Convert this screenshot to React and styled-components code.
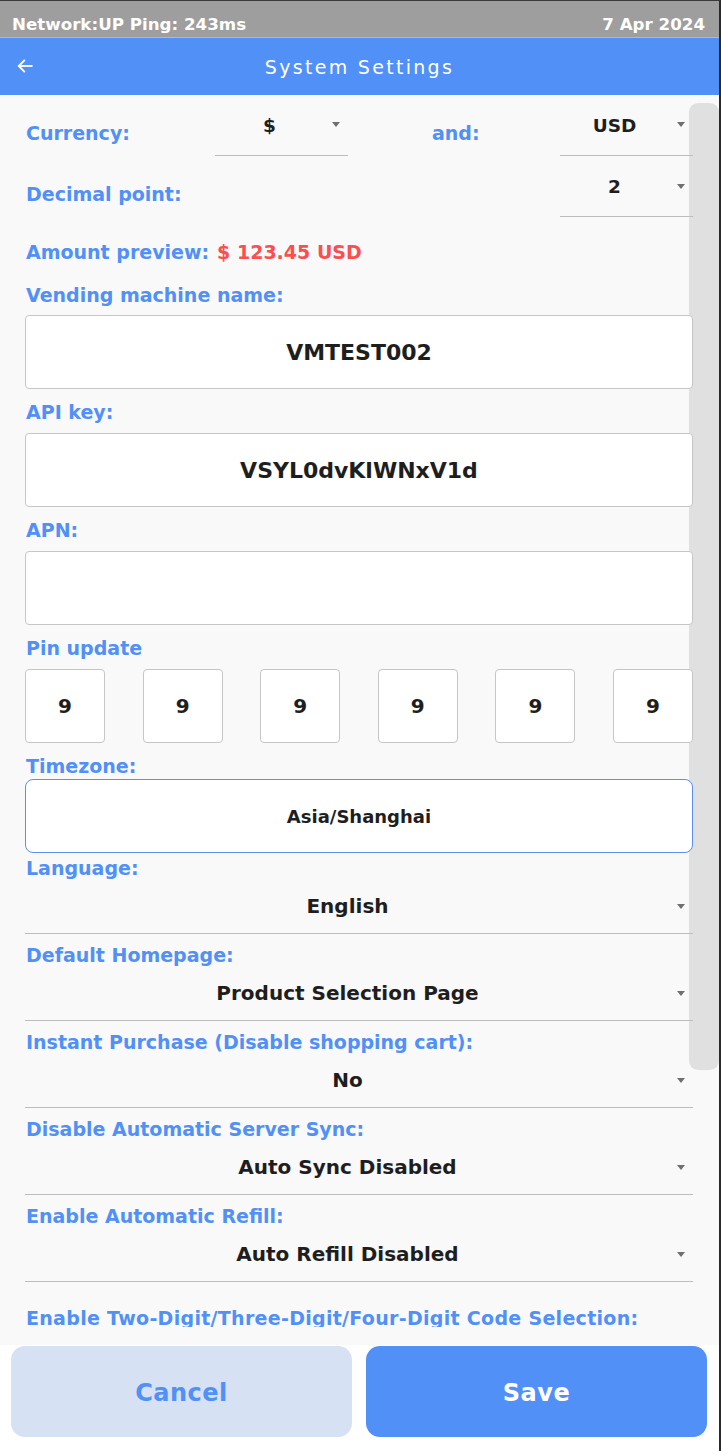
import React from 'react'
import styled, { createGlobalStyle } from 'styled-components'

const BLUE = '#5190f7'
const FONT = `"DejaVu Sans", "Noto Sans", sans-serif`

const GlobalStyle = createGlobalStyle`
  html, body {
    margin: 0;
    padding: 0;
    background: #ffffff;
  }
  * {
    box-sizing: border-box;
  }
`

const Frame = styled.div`
  width: 721px;
  height: 1451px;
  display: flex;
  flex-direction: column;
  border-top: 1px solid #3a3a3a;
  border-right: 2px solid #2a2a2a;
  background: #ffffff;
  overflow: hidden;
  font-family: ${FONT};
`

const StatusBar = styled.div`
  height: 37px;
  flex-shrink: 0;
  background: #9e9e9e;
  display: flex;
  align-items: center;
  justify-content: space-between;
  padding: 9px 14px 0 12px;
  color: #ffffff;
  font-weight: 700;
  font-size: 16.7px;
  border-bottom: 1px solid #b8b8b8;
`

const Header = styled.div`
  height: 57px;
  flex-shrink: 0;
  background: ${BLUE};
  display: flex;
  align-items: center;
  position: relative;
  justify-content: center;
  color: #ffffff;
  font-size: 19px;
  letter-spacing: 2.3px;
`

const BackButton = styled.div`
  position: absolute;
  left: 15px;
  top: 18px;
  width: 20px;
  height: 20px;
  display: flex;
`

const Content = styled.div`
  flex: 1;
  position: relative;
  overflow: hidden;
  background: #f9f9f9;
  padding: 10px 28px 0 25px;
`

const ScrollThumb = styled.div`
  position: absolute;
  right: 0;
  top: 8px;
  width: 30px;
  height: 967px;
  border-radius: 9px;
  background: #e0e0e0;
`

const Inner = styled.div`
  position: relative;
  width: 668px;
`

const TopRow = styled.div`
  display: flex;
  height: 51px;
  margin-top: ${p => p.$mt || 0}px;
`

const InlineLabel = styled.div`
  width: ${p => p.$w}px;
  padding-top: ${p => p.$pt || 18}px;
  padding-left: 1px;
  font-weight: 700;
  font-size: 19px;
  color: ${BLUE};
  margin-left: ${p => p.$ml || 0}px;
`

const SmallSelect = styled.div`
  width: 133px;
  height: 51px;
  position: relative;
  border-bottom: 1px solid #bdbdbd;
  padding: 10px 24px 0 0;
  text-align: center;
  font-weight: 700;
  font-size: 18.5px;
  color: #1e1e1e;
`

const Caret = styled.span`
  position: absolute;
  right: 8px;
  top: ${p => p.$top}px;
  width: 0;
  height: 0;
  border-left: 4px solid transparent;
  border-right: 4px solid transparent;
  border-top: 5px solid #6f6f6f;
`

const Preview = styled.div`
  margin-top: 23px;
  height: 24px;
  padding-left: 1px;
  display: flex;
  align-items: center;
  gap: 8px;
  font-weight: 700;
  font-size: 19px;
  color: ${BLUE};
`

const Amount = styled.span`
  color: #fb4f4f;
`

const FieldLabel = styled.div`
  margin-top: ${p => p.$mt ?? 11}px;
  height: ${p => p.$h || 24}px;
  line-height: 24px;
  padding-left: 1px;
  overflow: hidden;
  font-weight: 700;
  font-size: 19px;
  letter-spacing: ${p => p.$ls || 0}px;
  color: ${BLUE};
  white-space: nowrap;
`

const TextBox = styled.div`
  margin-top: ${p => p.$mt ?? 9}px;
  height: 74px;
  display: flex;
  align-items: center;
  justify-content: center;
  background: #ffffff;
  border: 1px solid ${p => (p.$focus ? '#5b8ff0' : '#c6c6c6')};
  border-radius: ${p => (p.$focus ? 8 : 4)}px;
  font-weight: 700;
  font-size: ${p => p.$size || 22}px;
  color: #1e1e1e;
`

const PinRow = styled.div`
  margin-top: 9px;
  display: flex;
  justify-content: space-between;
`

const PinBox = styled.div`
  width: 80px;
  height: 74px;
  display: flex;
  align-items: center;
  justify-content: center;
  background: #ffffff;
  border: 1px solid #c6c6c6;
  border-radius: 4px;
  font-weight: 700;
  font-size: 20px;
  color: #1e1e1e;
`

const WideSelect = styled.div`
  position: relative;
  height: 54px;
  display: flex;
  align-items: center;
  justify-content: center;
  border-bottom: 1px solid #bdbdbd;
  font-weight: 700;
  font-size: 20px;
  color: #1e1e1e;
  padding: 0 23px 1px 0;
`

const Footer = styled.div`
  height: 106px;
  flex-shrink: 0;
  display: flex;
  gap: 14px;
  padding: 1px 12px 14px 11px;
  background: #ffffff;
`

const Button = styled.div`
  flex: 1;
  display: flex;
  align-items: center;
  justify-content: center;
  padding-top: 3px;
  border-radius: 14px;
  background: ${p => (p.$primary ? BLUE : '#d6e1f3')};
  color: ${p => (p.$primary ? '#ffffff' : BLUE)};
  font-weight: 700;
  font-size: 24px;
  letter-spacing: 0.5px;
`

const selects = [
  { label: 'Language:', value: 'English', mt: 3 },
  { label: 'Default Homepage:', value: 'Product Selection Page' },
  { label: 'Instant Purchase (Disable shopping cart):', value: 'No' },
  { label: 'Disable Automatic Server Sync:', value: 'Auto Sync Disabled' },
  { label: 'Enable Automatic Refill:', value: 'Auto Refill Disabled' },
]

export default function App() {
  return (
    <Frame>
      <GlobalStyle />
      <StatusBar>
        <span>Network:UP Ping: 243ms</span>
        <span>7 Apr 2024</span>
      </StatusBar>
      <Header>
        <BackButton>
          <svg width="20" height="20" viewBox="0 0 24 24" fill="none" stroke="#fff" strokeWidth="2.2" strokeLinecap="square">
            <path d="M20 12H5" />
            <path d="M11 5.5L4.5 12l6.5 6.5" />
          </svg>
        </BackButton>
        System Settings
      </Header>
      <Content>
        <ScrollThumb />
        <Inner>
          <TopRow>
            <InlineLabel $w={190} $pt={17}>Currency:</InlineLabel>
            <SmallSelect>$<Caret $top={17} /></SmallSelect>
            <InlineLabel $w={129} $ml={83} $pt={17}>and:</InlineLabel>
            <SmallSelect>USD<Caret $top={17} /></SmallSelect>
          </TopRow>
          <TopRow $mt={10}>
            <InlineLabel $w={535} $pt={17}>Decimal point:</InlineLabel>
            <SmallSelect>2<Caret $top={18} /></SmallSelect>
          </TopRow>
          <Preview>
            Amount preview:
            <Amount>$ 123.45 USD</Amount>
          </Preview>
          <FieldLabel $mt={19}>Vending machine name:</FieldLabel>
          <TextBox $mt={8}>VMTEST002</TextBox>
          <FieldLabel>API key:</FieldLabel>
          <TextBox>VSYL0dvKlWNxV1d</TextBox>
          <FieldLabel>APN:</FieldLabel>
          <TextBox />
          <FieldLabel>Pin update</FieldLabel>
          <PinRow>
            {[9, 9, 9, 9, 9, 9].map((d, i) => (
              <PinBox key={i}>{d}</PinBox>
            ))}
          </PinRow>
          <FieldLabel>Timezone:</FieldLabel>
          <TextBox $mt={1} $focus $size={18}>Asia/Shanghai</TextBox>
          {selects.map(s => (
            <React.Fragment key={s.label}>
              <FieldLabel $mt={s.mt ?? 9}>{s.label}</FieldLabel>
              <WideSelect>
                {s.value}
                <Caret $top={24} />
              </WideSelect>
            </React.Fragment>
          ))}
          <FieldLabel $mt={24} $h={21} $ls={0.3}>Enable Two-Digit/Three-Digit/Four-Digit Code Selection:</FieldLabel>
        </Inner>
      </Content>
      <Footer>
        <Button>Cancel</Button>
        <Button $primary>Save</Button>
      </Footer>
    </Frame>
  )
}
